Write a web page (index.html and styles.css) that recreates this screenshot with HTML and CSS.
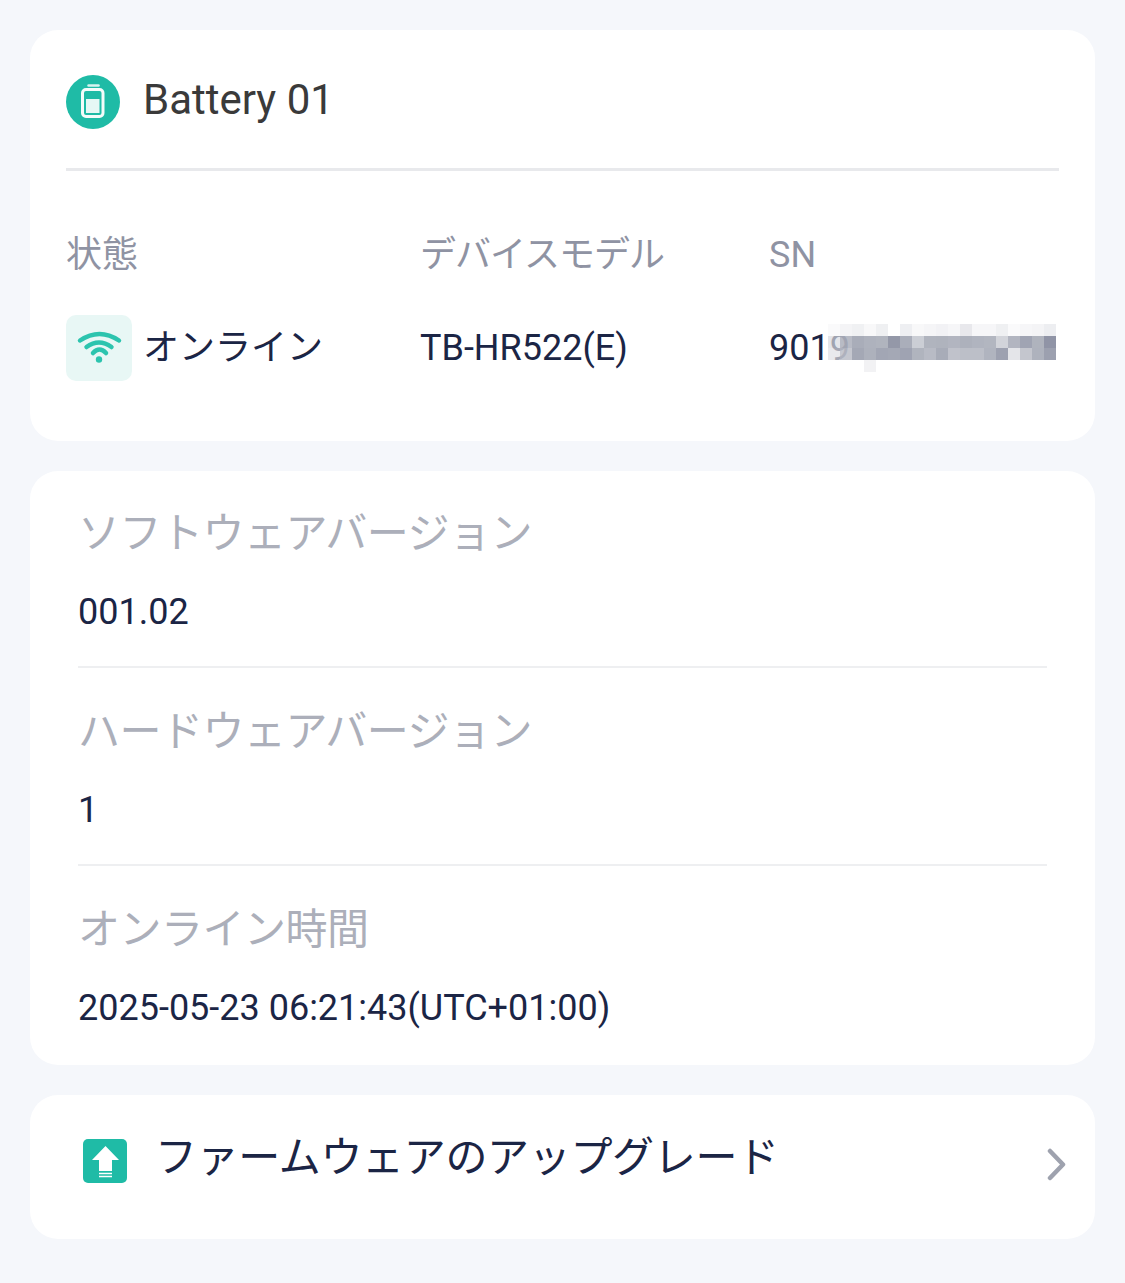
FILE: index.html
```html
<!DOCTYPE html>
<html lang="ja">
<head>
<meta charset="utf-8">
<title>Battery 01</title>
<link rel="stylesheet" href="styles.css">
</head>
<body>
<main class="page">
  <section class="card device">
    <header class="device-head">
      <span class="badge">
        <svg viewBox="0 0 54 54" width="54" height="54"><circle cx="27" cy="27" r="27" fill="#1fbba6"/><path d="M22.500 10.500H32.500" stroke="#d8f4ef" stroke-width="2.500" stroke-linecap="round"/><rect x="16.500" y="14.500" width="20.500" height="27" rx="3.500" fill="none" stroke="#f4fcfa" stroke-width="3"/><rect x="20" y="24" width="13.500" height="14" fill="#e6f8f5"/></svg>
      </span>
      <h1 class="device-name">Battery 01</h1>
    </header>
    <div class="specs">
      <div class="spec-label">状態</div>
      <div class="spec-label tight">デバイスモデル</div>
      <div class="spec-label">SN</div>
      <div class="status">
        <span class="wifi">
          <svg viewBox="0 0 66 66" width="66" height="66"><g fill="none" stroke="#2cc4ae" stroke-linecap="round" stroke-width="4.500"><path d="M14 25.500Q33.500 12.500 53 25.500"/><path d="M20.500 32Q33 23 45.500 32"/><path d="M27 38Q33.500 31 40 38"/></g><circle cx="33" cy="44.500" r="3.200" fill="#2cc4ae"/></svg>
        </span>
        <span class="spec-value jp">オンライン</span>
      </div>
      <div class="spec-value">TB-HR522(E)</div>
      <div class="spec-value sn">9019
        <svg class="mosaic" viewBox="0 0 228 48" width="228" height="48" aria-hidden="true">
          <g>
            <rect x="0" y="0" width="12" height="12" fill="#fafafb"/><rect x="12" y="0" width="12" height="12" fill="#f4f4f6"/><rect x="24" y="0" width="12" height="12" fill="#f0f1f3"/><rect x="36" y="0" width="12" height="12" fill="#f8f8f9"/><rect x="48" y="0" width="12" height="12" fill="#eff0f2"/><rect x="60" y="0" width="12" height="12" fill="#ffffff"/><rect x="72" y="0" width="12" height="12" fill="#eeeff2"/><rect x="84" y="0" width="12" height="12" fill="#f8f8f9"/><rect x="96" y="0" width="12" height="12" fill="#f5f5f7"/><rect x="108" y="0" width="12" height="12" fill="#f2f2f5"/><rect x="120" y="0" width="12" height="12" fill="#f6f6f8"/><rect x="132" y="0" width="12" height="12" fill="#e8e8ec"/><rect x="144" y="0" width="12" height="12" fill="#f6f6f8"/><rect x="156" y="0" width="12" height="12" fill="#f6f6f8"/><rect x="168" y="0" width="12" height="12" fill="#eff0f2"/><rect x="180" y="0" width="12" height="12" fill="#fafafb"/><rect x="192" y="0" width="12" height="12" fill="#f6f6f8"/><rect x="204" y="0" width="12" height="12" fill="#f4f4f6"/><rect x="216" y="0" width="12" height="12" fill="#edeef1"/>
            <rect x="0" y="12" width="12" height="12" fill="#d8dae0" fill-opacity=".7"/><rect x="12" y="12" width="12" height="12" fill="#b0b4bf" fill-opacity=".9"/><rect x="24" y="12" width="12" height="12" fill="#a9adb9"/><rect x="36" y="12" width="12" height="12" fill="#aeb2bd"/><rect x="48" y="12" width="12" height="12" fill="#b0b4be"/><rect x="60" y="12" width="12" height="12" fill="#9498a8"/><rect x="72" y="12" width="12" height="12" fill="#aaaeba"/><rect x="84" y="12" width="12" height="12" fill="#cbced5"/><rect x="96" y="12" width="12" height="12" fill="#b0b4be"/><rect x="108" y="12" width="12" height="12" fill="#afb3bd"/><rect x="120" y="12" width="12" height="12" fill="#b2b5c0"/><rect x="132" y="12" width="12" height="12" fill="#adb1bc"/><rect x="144" y="12" width="12" height="12" fill="#b0b4bf"/><rect x="156" y="12" width="12" height="12" fill="#b2b6c0"/><rect x="168" y="12" width="12" height="12" fill="#d2d4da"/><rect x="180" y="12" width="12" height="12" fill="#b2b5c0"/><rect x="192" y="12" width="12" height="12" fill="#a0a4b3"/><rect x="204" y="12" width="12" height="12" fill="#afb3bd"/><rect x="216" y="12" width="12" height="12" fill="#9094a6"/>
            <rect x="0" y="24" width="12" height="12" fill="#dfe0e5" fill-opacity=".7"/><rect x="12" y="24" width="12" height="12" fill="#bfc1ca" fill-opacity=".9"/><rect x="24" y="24" width="12" height="12" fill="#a4a8b5"/><rect x="36" y="24" width="12" height="12" fill="#adb1bc"/><rect x="48" y="24" width="12" height="12" fill="#a2a6b4"/><rect x="60" y="24" width="12" height="12" fill="#a4a8b5"/><rect x="72" y="24" width="12" height="12" fill="#9fa3b2"/><rect x="84" y="24" width="12" height="12" fill="#b0b4be"/><rect x="96" y="24" width="12" height="12" fill="#b8bbc5"/><rect x="108" y="24" width="12" height="12" fill="#a8acb8"/><rect x="120" y="24" width="12" height="12" fill="#c0c2cb"/><rect x="132" y="24" width="12" height="12" fill="#bcbfc8"/><rect x="144" y="24" width="12" height="12" fill="#bcbfc8"/><rect x="156" y="24" width="12" height="12" fill="#b0b4bf"/><rect x="168" y="24" width="12" height="12" fill="#9da1b0"/><rect x="180" y="24" width="12" height="12" fill="#e4e5e9"/><rect x="192" y="24" width="12" height="12" fill="#c4c6ce"/><rect x="204" y="24" width="12" height="12" fill="#aeb2bd"/><rect x="216" y="24" width="12" height="12" fill="#9ca0af"/>
            <rect x="36" y="36" width="12" height="12" fill="#f2f2f4"/>
          </g>
        </svg>
      </div>
    </div>
  </section>

  <section class="card info">
    <div class="info-row">
      <div class="info-label">ソフトウェアバージョン</div>
      <div class="info-value">001.02</div>
    </div>
    <div class="info-row">
      <div class="info-label">ハードウェアバージョン</div>
      <div class="info-value">1</div>
    </div>
    <div class="info-row">
      <div class="info-label">オンライン時間</div>
      <div class="info-value">2025-05-23 06:21:43(UTC+01:00)</div>
    </div>
  </section>

  <section class="card upgrade">
    <span class="up-icon">
      <svg viewBox="0 0 44 44" width="44" height="44"><rect width="44" height="44" rx="5" fill="#1fbba6"/><path d="M22.500 7 36 21H29V32H16V21H9Z" fill="#fff"/><path d="M16 34.500H29M16 37.500H29" stroke="#fff" stroke-width="1.500"/></svg>
    </span>
    <span class="up-label">ファームウェアのアップグレード</span>
    <svg class="chev" viewBox="0 0 20 34" width="20" height="34"><path d="M3 3 16 16.500 3 30" fill="none" stroke="#9ea2ae" stroke-width="4.500" stroke-linecap="round" stroke-linejoin="round"/></svg>
  </section>
</main>
</body>
</html>
```
FILE: styles.css
```css
* { box-sizing: border-box; }
html, body { margin: 0; padding: 0; }
body {
  background: #f5f7fb;
  font-family: Roboto, "Noto Sans CJK JP", sans-serif;
  width: 1125px;
  height: 1283px;
  overflow: hidden;
}
.page {
  padding: 30px 30px 0;
  display: flex;
  flex-direction: column;
  gap: 30px;
}
.card {
  background: #fff;
  border-radius: 28px;
}
.device {
  height: 411px;
  padding: 0 36px;
}
.device-head {
  height: 141px;
  border-bottom: 3px solid #e8e9ec;
  display: flex;
  align-items: center;
  gap: 23px;
  padding-top: 6px;
}
.badge { display: flex; width: 54px; height: 54px; }
.device-name {
  margin: 0 0 4px;
  font-size: 42px;
  font-weight: 400;
  color: #3a3a3a;
  line-height: 50px;
}
.specs {
  display: grid;
  grid-template-columns: 354px 349px 1fr;
  grid-template-rows: 46px 66px;
  row-gap: 37px;
  padding-top: 61px;
  align-items: center;
}
.spec-label {
  font-size: 36px;
  color: #8f93a3;
  line-height: 46px;
  white-space: nowrap;
}
.tight { letter-spacing: -1px; }
.spec-value {
  font-size: 36px;
  color: #1b2545;
  line-height: 46px;
  white-space: nowrap;
}
.status { display: flex; align-items: center; gap: 11px; }
.wifi {
  width: 66px;
  height: 66px;
  background: #e8f7f5;
  border-radius: 10px;
  display: flex;
}
.sn { position: relative; }
.mosaic {
  position: absolute;
  left: 59px;
  top: -1px;
}
.info {
  height: 594px;
  padding: 0 48px;
}
.info-row {
  height: 198px;
  padding-top: 36px;
  border-bottom: 2px solid #eeeff1;
}
.info-row:first-child {
  height: 197px;
  padding-top: 35px;
}
.info-row:last-child { border-bottom: none; }
.info-label {
  font-size: 42px;
  line-height: 56px;
  color: #acafba;
  white-space: nowrap;
  letter-spacing: -.5px;
}
.info-value {
  font-size: 36px;
  line-height: 46px;
  color: #1b2545;
  margin-top: 27px;
}
.upgrade {
  height: 144px;
  padding: 0 28px 0 53px;
  display: flex;
  align-items: center;
}
.up-icon { display: flex; width: 44px; height: 44px; margin-top: -12px; }
.up-label {
  font-size: 42px;
  color: #1b2545;
  line-height: 56px;
  margin-left: 28px;
  margin-top: -18px;
  white-space: nowrap;
  flex: 1;
  letter-spacing: -.33px;
}
.chev { margin-top: -4px; }
```
